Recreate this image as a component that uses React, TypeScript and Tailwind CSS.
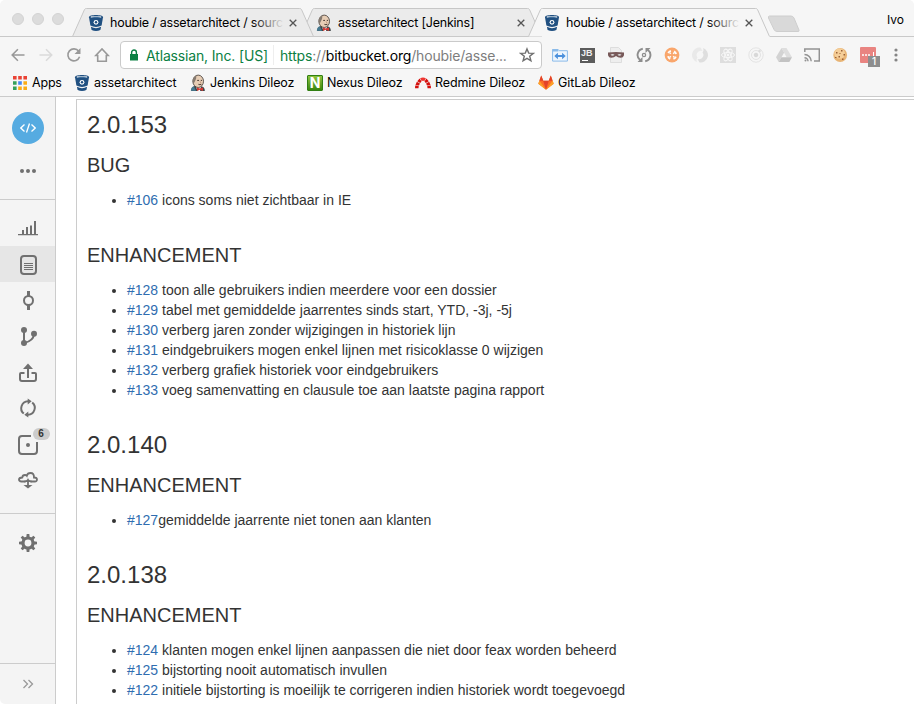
import React from "react";

type IconProps = { className?: string };

const Bitbucket = ({ className = "" }: IconProps) => (
  <svg viewBox="0 0 16 18" className={`h-[18px] w-4 shrink-0 ${className}`}>
    <path d="M1 3.2 C1 0.4 15 0.4 15 3.2 L13.6 11.5 Q8 14.4 2.4 11.5Z" fill="#205081" />
    <ellipse cx="8" cy="3" rx="5.4" ry="1.1" fill="#f5f5f5" />
    <ellipse cx="8" cy="3.2" rx="4.6" ry=".8" fill="#3c6b99" />
    <circle cx="8" cy="8.3" r="2.4" fill="#fff" />
    <circle cx="8" cy="8.3" r="1.2" fill="#205081" />
    <path d="M2.9 12.8 Q8 15.6 13.1 12.8 L12.4 16 Q8 18.2 3.6 16Z" fill="#205081" />
  </svg>
);

const Jenkins = ({ className = "" }: IconProps) => (
  <svg viewBox="0 0 16 18" className={`h-[18px] w-4 shrink-0 ${className}`}>
    <path d="M1.2 17 Q1 13.4 4.6 12 L12 12.6 Q14.8 13.4 14.8 17Z" fill="#3f4548" />
    <path d="M.8 16.8 Q1 12.6 4 12.4 L6 17Z" fill="#477a91" />
    <path d="M6 12.5 L11 13 L10 17 H7.5Z" fill="#fff" />
    <ellipse cx="8.2" cy="7.3" rx="5.3" ry="6.2" fill="#e6cdb5" stroke="#4f4742" strokeWidth=".9" />
    <path d="M3.2 10.5 Q1 3.5 6.5 1.4 L6 5 L4.8 7.5 Z" fill="#857a70" />
    <path d="M7.2 6.4h1.8M10.8 6.4h1.2M8.4 10.3q1.6.8 3 0" stroke="#4c3c34" strokeWidth="1" fill="none" />
    <path d="M10 7.2l.9 1.6-.9.2" stroke="#b07d64" strokeWidth=".6" fill="none" />
    <path d="M7 13.4 L9.7 14.6 L13 13.6 V17 L9.8 15.8 L7 17Z" fill="#d33833" />
  </svg>
);

const AppsIcon = () => (
  <svg viewBox="0 0 14 14" className="h-3.5 w-3.5 shrink-0">
    <path d="M0 0h3.6v3.6H0zM5.2 0h3.6v3.6H5.2zM10.4 0H14v3.6h-3.6z" fill="#ea4335" />
    <path d="M0 5.2h3.6v3.6H0zM0 10.4h3.6V14H0z" fill="#34a05a" />
    <path d="M5.2 5.2h3.6v3.6H5.2z" fill="#4285f4" />
    <path d="M10.4 5.2H14v3.6h-3.6zM5.2 10.4h3.6V14H5.2zM10.4 10.4H14V14h-3.6z" fill="#fbac15" />
  </svg>
);

const Redmine = () => (
  <svg viewBox="0 0 16 13" className="h-[13px] w-4 shrink-0" fill="#d4100d">
    <path d="M0 12.3 .2 9.6 3.7 10 3.500 12.300zM.5 8.900 1.800 5.700 4.900 7.500 4 9.500zM2.200 5.200 4.600 2.500 6.500 5.500 5.200 7z" />
    <path d="M5.100 2.200Q8 .8 10.900 2.200L9.400 5.100Q8 4.500 6.600 5.100z" fill="#ef3430" />
    <path d="M16 12.300 15.800 9.600 12.300 10 12.500 12.300zM15.500 8.900 14.200 5.700 11.100 7.500 12 9.500zM13.800 5.200 11.400 2.500 9.500 5.500 10.800 7z" />
  </svg>
);

const GitLab = () => (
  <svg viewBox="0 0 16 15" className="h-[15px] w-4 shrink-0">
    <path d="M8 14.7 L.3 8.8 L3.2 .5 L5.3 5.8 H10.7 L12.8 .5 L15.7 8.8Z" fill="#fc6d26" />
    <path d="M8 14.7 L5.2 5.8H10.8Z" fill="#e24329" />
    <path d="M3.2 .5 L1.4 5.8H5.3ZM12.8 .5 L10.7 5.8H14.6Z" fill="#e24329" />
    <path d="M8 14.7 L.3 8.8 L1.4 5.8ZM8 14.7L15.7 8.8L14.6 5.8Z" fill="#fca326" />
  </svg>
);

type TabProps = {
  title: string;
  icon: React.ReactNode;
  active?: boolean;
  faded?: boolean;
  className?: string;
};

const Tab = ({ title, icon, active, faded, className = "" }: TabProps) => (
  <div className={`relative flex h-[37px] w-[242px] shrink-0 items-center pt-[9px] pl-4 ${className}`}>
    <svg viewBox="0 0 242 37" className="absolute inset-0 h-[37px] w-[242px]">
      <path
        d="M.5 36.5 L12.5 9.5 Q13 8.5 14.5 8.5 H227.5 Q229 8.5 229.5 9.5 L241.5 36.5"
        fill={active ? "#f6f6f6" : "#ebebeb"}
        stroke="#c7c7c7"
      />
      {active ? null : <path d="M0 36.5H242" stroke="#c9c9c9" />}
    </svg>
    <div className="relative flex w-full items-center">
      {icon}
      <div className="relative ml-[6px] w-[174px] text-[12.5px] leading-[18px] tracking-[-0.22px] whitespace-nowrap text-black">
        <span>{title}</span>
        {faded ? (
          <div
            className={`absolute inset-y-0 right-0 w-8 bg-linear-to-r from-transparent ${active ? "to-[#f6f6f6]" : "to-[#ebebeb]"}`}
          />
        ) : null}
      </div>
      <svg viewBox="0 0 8 8" className="ml-[5px] h-2 w-2" stroke="#555" strokeWidth="1.3">
        <path d="M.7 .7 7.3 7.3M7.3 .7 .7 7.3" />
      </svg>
    </div>
  </div>
);

const NavButtons = () => (
  <div className="flex w-[120px] shrink-0 items-center gap-3 pl-[10px]">
    <svg viewBox="0 0 16 16" className="h-4 w-4" fill="none" stroke="#999" strokeWidth="1.6">
      <path d="M14.5 8H2.3M7.9 2.3 2.2 8l5.7 5.7" />
    </svg>
    <svg viewBox="0 0 16 16" className="h-4 w-4" fill="none" stroke="#dadada" strokeWidth="1.6">
      <path d="M1.5 8h12.2M8 2.3 13.7 8 8 13.7" />
    </svg>
    <svg viewBox="0 0 16 16" className="h-4 w-4" fill="none" stroke="#999" strokeWidth="1.6">
      <path d="M12.7 4.2A6 6 0 1 0 13.6 9.8" />
      <path d="M14.5 1v6h-6z" fill="#999" stroke="none" />
    </svg>
    <svg viewBox="0 0 16 16" className="h-4 w-4" fill="none" stroke="#999" strokeWidth="1.6">
      <path d="M3.7 8.5H1.8L8 2l6.2 6.5h-1.9v5.8H3.7z" />
    </svg>
  </div>
);

const ext = "h-4 w-4 shrink-0";

const Extensions = () => (
  <div className="flex items-center gap-3 pl-[10px]">
    <svg viewBox="0 0 16 16" className={ext}>
      <path d="M.6 2.5H6l1.2 1.2h8.2v10.4H.6z" fill="#eef6fd" stroke="#8bbbe9" />
      <path d="M.5 2h5.8v2.5H.5z" fill="#8bbbe9" />
      <path d="M2.3 9 5.9 5.8v2.3h4.2V5.8L13.7 9l-3.6 3.2V9.9H5.9v2.3z" fill="#4d91dc" />
    </svg>
    <div className="flex h-[15px] w-[15px] shrink-0 flex-col bg-[#5c5c5c] pt-px text-[#eee]">
      <span className="pl-px font-[Liberation_Sans] text-[9px] leading-[9px] font-bold">JB</span>
      <span className="mt-[2px] ml-[2px] h-px w-[6px] bg-white" />
    </div>
    <svg viewBox="0 0 16 16" className={`-ml-px box-content pl-[2px] ${ext}`}>
      <path d="M2.5 .5h8l3 3v12h-11z" fill="#eee" stroke="#ddd" />
      <path d="M0 5.5q8-.8 16 0v2.7q-.6 2.6-3.4 2.6-2.8 0-4.6-1.8-1.800 1.800-4.600 1.800Q.6 10.800 0 8.200z" fill="#775858" />
      <path d="M2.5 7.800q2-1.600 4 0-2 1.800-4 0M9.500 7.800q2-1.600 4 0-2 1.800-4 0" fill="#ddd" />
    </svg>
    <svg viewBox="0 0 16 16" className={ext} fill="none" stroke="#8d8d8d" strokeWidth="1.900">
      <path d="M6.800 1.700A6.400 6.400 0 0 0 4 13M9.200 14.300A6.400 6.400 0 0 0 12 3" />
      <path d="M1.500 15h5v-5zM14.500 1h-5v5z" fill="#8d8d8d" stroke="none" />
      <circle cx="8" cy="8" r="1.600" strokeWidth="1.300" />
    </svg>
    <svg viewBox="0 0 16 16" className={ext}>
      <circle cx="8" cy="8" r="7.400" fill="#f9a66c" />
      <circle cx="8" cy="8" r="4.200" fill="none" stroke="#fff" strokeWidth="1.900" strokeDasharray="3.300 3.297" strokeDashoffset="-1.649" />
      <path d="m5.800 5.800 1 1m2.400 2.400 1 1m0-4.400-1 1m-2.400 2.400-1 1" stroke="#fff" strokeWidth="1.500" />
    </svg>
    <svg viewBox="0 0 16 16" className={ext}>
      <path d="M8.500 .5A7.500 7.500 0 0 0 5 15Q3.800 12.500 5.500 10.500Q3.500 8 5.500 5.500Q7 3.200 10.500 4z" fill="#e9e9e9" />
      <path d="M7.500 15.500A7.500 7.500 0 0 0 11 1Q12.200 3.500 10.500 5.500Q12.500 8 10.500 10.500Q9 12.800 5.500 12z" fill="#dedede" />
    </svg>
    <svg viewBox="0 0 16 16" className={ext} fill="none" stroke="#f7f7f7">
      <path d="M0 0h16v16H0z" fill="#dedede" stroke="none" />
      <ellipse cx="8" cy="8" rx="6.5" ry="2.6" />
      <ellipse cx="8" cy="8" rx="6.5" ry="2.6" transform="rotate(60 8 8)" />
      <ellipse cx="8" cy="8" rx="6.5" ry="2.6" transform="rotate(120 8 8)" />
      <circle cx="8" cy="8" r="1" fill="#fff" />
    </svg>
    <svg viewBox="0 0 16 16" className={ext} fill="none" stroke="#e3e3e3">
      <circle cx="8" cy="8" r="7.2" />
      <circle cx="8" cy="8" r="4.5" />
      <circle cx="8" cy="8" r="1.8" fill="#d8d8d8" stroke="#d8d8d8" />
      <circle cx="11.5" cy="4" r="1" fill="#d5d5d5" />
    </svg>
    <svg viewBox="0 0 16 16" className={ext}>
      <path d="M5.5 1 0 10.2 2.7 15 8.2 5.6z" fill="#d3d3d3" />
      <path d="M5.5 1h5L16 10.2h-5.4z" fill="#dedede" />
      <path d="M5.4 10.2H16L13.3 15H2.7z" fill="#c3c3c3" />
    </svg>
    <svg viewBox="0 0 16 16" className={ext} fill="none" stroke="#929292" strokeWidth="1.5">
      <path d="M.8 5V2h14.5v12H10M.5 7.5A6.7 6.7 0 0 1 7.2 14.2M.5 10.7A3.5 3.5 0 0 1 4 14.2" />
      <circle cx="1.5" cy="13.5" r="1" fill="#929292" stroke="none" />
    </svg>
    <svg viewBox="0 0 16 16" className={ext}>
      <circle cx="8.2" cy="8" r="6.9" fill="#e8b475" />
      <circle cx="7.6" cy="6.5" r="5.3" fill="#f5ce98" />
      <path d="M4 5h1.500v1.500H4zM9 3h1.500v1.500H9zM11.500 7H13v1.500h-1.500zM6.500 9H8v1.500H6.500zM10 11.500h1.500V13H10zM3 10h1.500v1H3zM7.500 6h1v1h-1z" fill="#9a6036" />
    </svg>
    <div className="relative h-4 w-4 shrink-0 rounded-[1px] bg-[#e98481]">
      <span className="absolute top-[7px] left-[2px] h-[2px] w-[2px] rounded-full bg-white shadow-[3px_0_0_#fff,6px_0_0_#fff]" />
      <span className="absolute top-[5px] right-[2px] h-[5px] w-px bg-white" />
      <span className="absolute top-[9px] left-2 h-[11px] w-3 bg-[#8e8e8e] text-center text-[10px] leading-[11px] font-medium text-white">
        1
      </span>
    </div>
    <svg viewBox="0 0 16 16" className={ext} fill="#858585">
      <circle cx="8" cy="3" r="1.6" />
      <circle cx="8" cy="8" r="1.6" />
      <circle cx="8" cy="13" r="1.6" />
    </svg>
  </div>
);

const AddressBar = () => (
  <div className="flex h-7 w-[422px] shrink-0 items-center rounded-[4px] border border-[#cacaca] bg-white pl-2 whitespace-nowrap">
    <svg viewBox="0 0 10 12" className="h-3 w-[10px] shrink-0">
      <path d="M1 5h8v6.5H1z" fill="#0b8043" />
      <path d="M2.6 5.5V3.4a2.4 2.4 0 0 1 4.8 0v2.1" fill="none" stroke="#0b8043" strokeWidth="1.4" />
    </svg>
    <span className="ml-[7px] w-[127px] text-[14px] tracking-[-0.16px] text-[#0b8043]">Atlassian, Inc. [US]</span>
    <span className="h-5 w-px bg-[#eee]" />
    <span className="ml-[6px] w-[233px] text-[14px] tracking-[-0.17px] text-[#7d7d7d]">
      <span className="text-[#0b8043]">https</span>://<span className="text-black">bitbucket.org</span>/houbie/asse...
    </span>
    <svg viewBox="0 0 16 16" className="ml-[6px] h-4 w-4 shrink-0" fill="none" stroke="#707070" strokeWidth="1.4">
      <path d="m8 1.9 1.7 4.2 4.6.3-3.6 2.9 1.2 4.5L8 11.3l-3.9 2.5 1.2-4.5-3.600-2.900 4.600-.3z" />
    </svg>
  </div>
);

const Bookmarks = () => (
  <div className="flex h-[26px] items-center pb-px pl-[13px] text-[12.5px] leading-[18px] tracking-[-0.05px] whitespace-nowrap text-black">
    <AppsIcon />
    <span className="ml-[5px] w-[43px] tracking-[-0.2px]">Apps</span>
    <Bitbucket className="-ml-px" />
    <span className="ml-1 w-[96px]">assetarchitect</span>
    <Jenkins />
    <span className="ml-1 w-[97px] tracking-[-0.1px]">Jenkins Dileoz</span>
    <span className="flex h-4 w-4 items-center justify-center rounded-[1px] border border-[#317f13] bg-linear-to-b from-[#8dc43d] to-[#39860d] text-[14px] font-bold text-white">
      N
    </span>
    <span className="ml-1 w-[88px] tracking-[-0.15px]">Nexus Dileoz</span>
    <Redmine />
    <span className="ml-1 w-[103px] tracking-[-0.1px]">Redmine Dileoz</span>
    <GitLab />
    <span className="ml-1">GitLab Dileoz</span>
  </div>
);

const side = "h-6 w-6 overflow-visible";

const sideIcons: React.ReactNode[] = [
  <svg viewBox="0 0 24 24" className={side} fill="#707070">
    <path d="M2 18h20v1.2H2zM6 14h2v4H6zM10 11h2v7h-2zM14 9.5h2V18h-2zM18 5h2v13h-2z" />
  </svg>,
  <svg viewBox="0 0 24 24" className={side} fill="none" stroke="#707070">
    <rect x="5" y="4" width="15" height="18" rx="3" strokeWidth="2" />
    <path d="M8 11.5h9M8 13.5h9M8 15.5h9M8 17.5h9" />
  </svg>,
  <svg viewBox="0 0 24 24" className={side} fill="none" stroke="#707070">
    <circle cx="12.5" cy="12.5" r="4.5" strokeWidth="2" />
    <path d="M12.5 3v5M12.5 17v5" strokeWidth="3" />
  </svg>,
  <svg viewBox="0 0 24 24" className={side} fill="none" stroke="#707070" strokeWidth="2">
    <path d="M8 6v13M8 19q9.5-2 10-9" />
    <g fill="#707070" stroke="none">
      <circle cx="8" cy="6" r="3" />
      <circle cx="8" cy="19" r="3" />
      <circle cx="18" cy="9.7" r="3" />
    </g>
  </svg>,
  <svg viewBox="0 0 24 24" className={side} fill="none" stroke="#707070" strokeWidth="2">
    <path d="M8.5 13H5q-1 0-1 1v5q0 2 2 2h12q2 0 2-2v-5q0-1-1-1h-3.5M12 18V7" />
    <path d="M12 3.5 7 9h10z" fill="#707070" stroke="none" />
  </svg>,
  <svg viewBox="0 0 24 24" className={side} fill="none" stroke="#707070" strokeWidth="2">
    <path d="M7.8 17.600A7 7 0 0 1 12 5.200M16.200 6.400A7 7 0 0 1 12 18.800" />
    <path d="m11.700 2.500 4 2.700-4 3.300zM12.300 21.500l-4-2.700 4-3.300z" fill="#707070" stroke="none" />
  </svg>,
  <div className="relative">
    <svg viewBox="0 0 24 24" className={side} fill="none" stroke="#707070" strokeWidth="2">
      <path d="M15 4H6Q3 4 3 7v12q0 3 3 3h12q3 0 3-3V10" />
      <circle cx="12" cy="13" r="2" fill="#707070" stroke="none" />
    </svg>
    <span className="absolute -top-1 left-[17px] h-3 w-[17px] rounded-full bg-[#ccc] text-center font-[Liberation_Sans] text-[10px] leading-3 font-bold text-[#333]">
      6
    </span>
  </div>,
  <svg viewBox="0 0 24 24" className={side} fill="none" stroke="#707070" strokeWidth="1.8">
    <path d="M9.500 13.500H5.500Q3 13.500 3 11.600T6.300 9.500Q6.500 7 9 7q1.200 0 1.800.8Q11.500 5 14.500 5q3.700 0 3.500 4.500 3 0 3 2.100T18.500 13.500H14.500" />
    <path d="M8.500 13.500q2.600 0 3.500-1.600.9 1.600 3.500 1.600M12 13v4.500" />
    <path d="m12 20.500-4.500-3.500h9z" fill="#707070" stroke="none" />
  </svg>,
];

const gearTeeth = [0, 45, 90, 135, 180, 225, 270, 315];

const Sidebar = () => (
  <aside className="flex w-[56px] shrink-0 flex-col border-r border-[#ccc] bg-[#f4f4f4]">
    <div className="flex h-[103px] flex-col items-center border-b border-[#ccc] pt-[15px]">
      <div className="flex h-8 w-8 items-center justify-center rounded-full bg-[#56abe1]">
        <svg viewBox="0 0 16 12" className="h-3 w-4" fill="none" stroke="#fff" strokeWidth="1.3">
          <path d="M4.5 2.5.8 6l3.7 3.5M11.5 2.5 15.2 6l-3.7 3.500M9.500 1.500l-3 9" />
        </svg>
      </div>
      <div className="mt-[25px] flex gap-[2px]">
        <span className="h-1 w-1 rounded-full bg-[#707070]" />
        <span className="h-1 w-1 rounded-full bg-[#707070]" />
        <span className="h-1 w-1 rounded-full bg-[#707070]" />
      </div>
    </div>
    <nav className="flex h-[314px] flex-col border-b border-[#ccc] pt-[10px]">
      {sideIcons.map((icon, i) => (
        <div key={i} className={`flex h-9 items-center justify-center ${i === 1 ? "bg-[#e6e6e6]" : ""}`}>
          {icon}
        </div>
      ))}
    </nav>
    <div className="flex h-[150px] justify-center border-b border-[#ccc] pt-[17px]">
      <svg viewBox="0 0 24 24" className={side} fill="#707070">
        <circle cx="12" cy="12" r="5" fill="none" stroke="#707070" strokeWidth="3.2" />
        {gearTeeth.map((angle) => (
          <path key={angle} d="M10.300 6.500 10.700 3h2.600l.4 3.500z" transform={`rotate(${angle} 12 12)`} />
        ))}
      </svg>
    </div>
    <div className="flex flex-1 items-center justify-center">
      <svg viewBox="0 0 12 10" className="h-[10px] w-3" fill="none" stroke="#999" strokeWidth="1.3">
        <path d="m1.5 1 4 4-4 4M6.5 1l4 4-4 4" />
      </svg>
    </div>
  </aside>
);

type Issue = [id: string, text: string];

const Heading = ({ children }: { children: React.ReactNode }) => (
  <h1 className="text-[24px] leading-[30px]">{children}</h1>
);

const Section = ({ title, issues }: { title: string; issues: Issue[] }) => (
  <section className="mb-[30px]">
    <h2 className="mb-[10px] text-[20px] leading-[30px]">{title}</h2>
    <ul className="pl-[40px] text-[14px] leading-5">
      {issues.map(([id, text]) => (
        <li key={id} className="flex items-center whitespace-pre">
          <span className="-ml-[15px] mt-px mr-[11px] h-1 w-1 rounded-full bg-[#333]" />
          <span className="text-[#2f6db0]">{id}</span>
          {text}
        </li>
      ))}
    </ul>
  </section>
);

export default function App() {
  return (
    <div className="flex h-[704px] w-[914px] flex-col overflow-hidden rounded-[5px] bg-white font-[Inter,sans-serif]">
      <header className="shrink-0 border-b border-[#cbcbcb] bg-[#f6f6f6]">
        <div className="flex h-[37px] items-end">
          <div className="flex h-[37px] w-[72px] shrink-0 items-center gap-2 border-b border-[#c9c9c9] pt-[2px] pl-3">
            <span className="h-3 w-3 rounded-full border border-[#d3d3d3] bg-[#dcdcdc]" />
            <span className="h-3 w-3 rounded-full border border-[#d3d3d3] bg-[#dcdcdc]" />
            <span className="h-3 w-3 rounded-full border border-[#d3d3d3] bg-[#dcdcdc]" />
          </div>
          <Tab title="houbie / assetarchitect / sourc" icon={<Bitbucket />} faded className="z-10" />
          <Tab title="assetarchitect [Jenkins]" icon={<Jenkins />} className="-ml-[14px]" />
          <Tab title="houbie / assetarchitect / sourc" icon={<Bitbucket />} active faded className="z-10 -ml-[14px]" />
          <div className="flex h-[37px] flex-1 items-start justify-between border-b border-[#c9c9c9] pr-[10px]">
            <svg viewBox="0 0 36 18" className="-ml-[4px] mt-[15px] h-[18px] w-9">
              <path d="M3.5 1H25q2 0 3 2l5 12q.5 1.5-1 1.5H11q-2 0-3-2L2.5 3Q2 1 3.5 1z" fill="#d9d9d9" stroke="#cecece" />
            </svg>
            <span className="mt-[11px] text-[12px] leading-[18px] text-black">Ivo</span>
          </div>
        </div>
        <div className="flex h-[33px] items-center pt-[3px]">
          <NavButtons />
          <AddressBar />
          <Extensions />
        </div>
        <Bookmarks />
      </header>
      <div className="flex min-h-0 flex-1">
        <Sidebar />
        <main className="flex min-w-0 flex-1 flex-col pt-[2px] pl-5">
          <article className="flex-1 overflow-hidden border-t border-l border-[#ccc] pt-[10px] pl-[10px] font-[Liberation_Sans,Arial,sans-serif] text-[#333]">
            <div className="flex flex-col gap-[10px]">
              <Heading>2.0.153</Heading>
              <Section title="BUG" issues={[["#106", " icons soms niet zichtbaar in IE"]]} />
            </div>
            <Section
              title="ENHANCEMENT"
              issues={[
                ["#128", " toon alle gebruikers indien meerdere voor een dossier"],
                ["#129", " tabel met gemiddelde jaarrentes sinds start, YTD, -3j, -5j"],
                ["#130", " verberg jaren zonder wijzigingen in historiek lijn"],
                ["#131", " eindgebruikers mogen enkel lijnen met risicoklasse 0 wijzigen"],
                ["#132", " verberg grafiek historiek voor eindgebruikers"],
                ["#133", " voeg samenvatting en clausule toe aan laatste pagina rapport"],
              ]}
            />
            <div className="flex flex-col gap-[10px]">
              <Heading>2.0.140</Heading>
              <Section title="ENHANCEMENT" issues={[["#127", "gemiddelde jaarrente niet tonen aan klanten"]]} />
            </div>
            <div className="flex flex-col gap-[10px]">
              <Heading>2.0.138</Heading>
              <Section
                title="ENHANCEMENT"
                issues={[
                  ["#124", " klanten mogen enkel lijnen aanpassen die niet door feax worden beheerd"],
                  ["#125", " bijstorting nooit automatisch invullen"],
                  ["#122", " initiele bijstorting is moeilijk te corrigeren indien historiek wordt toegevoegd"],
                ]}
              />
            </div>
          </article>
        </main>
      </div>
    </div>
  );
}
